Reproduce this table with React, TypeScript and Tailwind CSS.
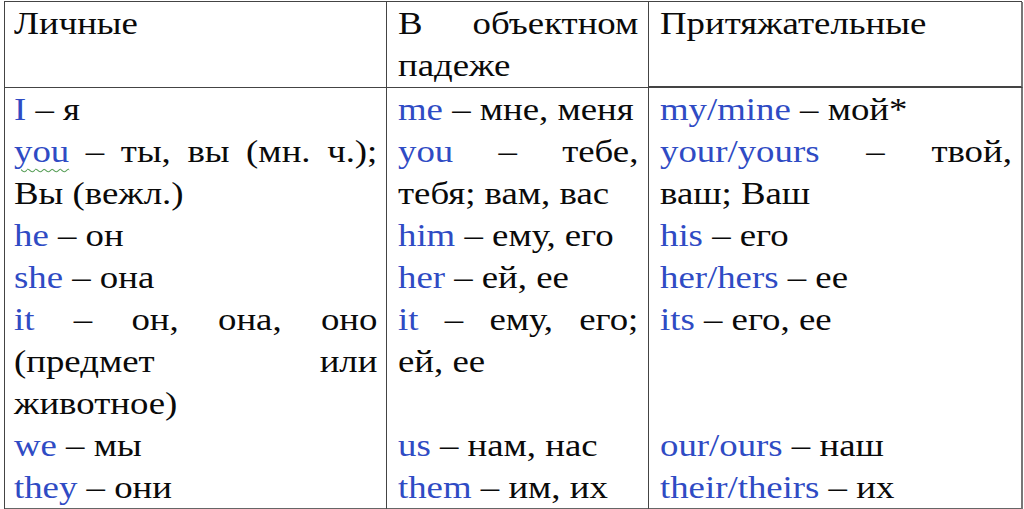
import type { ReactNode } from "react";

const B = ({ children, wavy }: { children: string; wavy?: boolean }) => (
  <span
    className={
      wavy
        ? "text-[#2f4bc4] underline decoration-wavy decoration-[#5aa05a] decoration-1 underline-offset-[6px]"
        : "text-[#2f4bc4]"
    }
  >
    {children}
  </span>
);

// one visual line of a cell
const L = ({ children }: { children?: ReactNode }) => (
  <div className="h-[42px] whitespace-nowrap font-['Liberation_Serif']">{children ?? "\u00a0"}</div>
);

// a justified line: words spread over the full cell width
const J = ({ parts }: { parts: ReactNode[] }) => (
  <div className="flex h-[42px] justify-between whitespace-nowrap font-['Liberation_Serif']">
    {parts.map((p, i) => (
      <span key={i}>{p}</span>
    ))}
  </div>
);

// the scanned table is stretched sideways, so the text is widened the same way
const Wide1 = ({ children }: { children: ReactNode }) => (
  <div className="w-[316px] origin-top-left scale-x-[1.15]">{children}</div>
);
const Wide2 = ({ children }: { children: ReactNode }) => (
  <div className="w-[209px] origin-top-left scale-x-[1.15]">{children}</div>
);
const Wide3 = ({ children }: { children: ReactNode }) => (
  <div className="w-[306px] origin-top-left scale-x-[1.15]">{children}</div>
);

export default function App() {
  return (
    <div className="min-h-screen overflow-hidden bg-white pt-[1px] pl-[4px] font-serif text-[32px] leading-[42px] text-[#0a0a0a]">
      <div className="grid w-[1018px] grid-cols-[382px_262px_374px] border-l border-t border-[#444]">
        {/* header */}
        <div className="border-b border-r border-[#444] px-[9px]">
          <Wide1>
            <L>Личные</L>
            <L />
          </Wide1>
        </div>
        <div className="border-b border-r border-[#444] px-[11px]">
          <Wide2>
            <J parts={["В", "объектном"]} />
            <L>падеже</L>
          </Wide2>
        </div>
        <div className="border-b-2 border-r-2 border-b-[#444] border-r-[#777] px-[11px]">
          <Wide3>
            <L>Притяжательные</L>
            <L />
          </Wide3>
        </div>

        {/* body */}
        <div className="border-b-2 border-r border-b-[#666] border-r-[#444] px-[9px]">
          <Wide1>
            <L>
              <B>I</B> – я
            </L>
            <J parts={[<B wavy>you</B>, "–", "ты,", "вы", "(мн.", "ч.);"]} />
            <L>Вы (вежл.)</L>
            <L>
              <B>he</B> – он
            </L>
            <L>
              <B>she</B> – она
            </L>
            <J parts={[<B>it</B>, "–", "он,", "она,", "оно"]} />
            <J parts={["(предмет", "или"]} />
            <L>животное)</L>
            <L>
              <B>we</B> – мы
            </L>
            <L>
              <B>they</B> – они
            </L>
          </Wide1>
        </div>
        <div className="border-b-2 border-r border-b-[#666] border-r-[#444] px-[11px]">
          <Wide2>
            <L>
              <B>me</B> – мне, меня
            </L>
            <J parts={[<B>you</B>, "–", "тебе,"]} />
            <L>тебя; вам, вас</L>
            <L>
              <B>him</B> – ему, его
            </L>
            <L>
              <B>her</B> – ей, ее
            </L>
            <J parts={[<B>it</B>, "–", "ему,", "его;"]} />
            <L>ей, ее</L>
            <L />
            <L>
              <B>us</B> – нам, нас
            </L>
            <L>
              <B>them</B> – им, их
            </L>
          </Wide2>
        </div>
        <div className="border-b-2 border-r-2 border-b-[#666] border-r-[#777] px-[11px]">
          <Wide3>
            <L>
              <B>my/mine</B> – мой*
            </L>
            <J parts={[<B>your/yours</B>, "–", "твой,"]} />
            <L>ваш; Ваш</L>
            <L>
              <B>his</B> – его
            </L>
            <L>
              <B>her/hers</B> – ее
            </L>
            <L>
              <B>its</B> – его, ее
            </L>
            <L />
            <L />
            <L>
              <B>our/ours</B> – наш
            </L>
            <L>
              <B>their/theirs</B> – их
            </L>
          </Wide3>
        </div>
      </div>
    </div>
  );
}
